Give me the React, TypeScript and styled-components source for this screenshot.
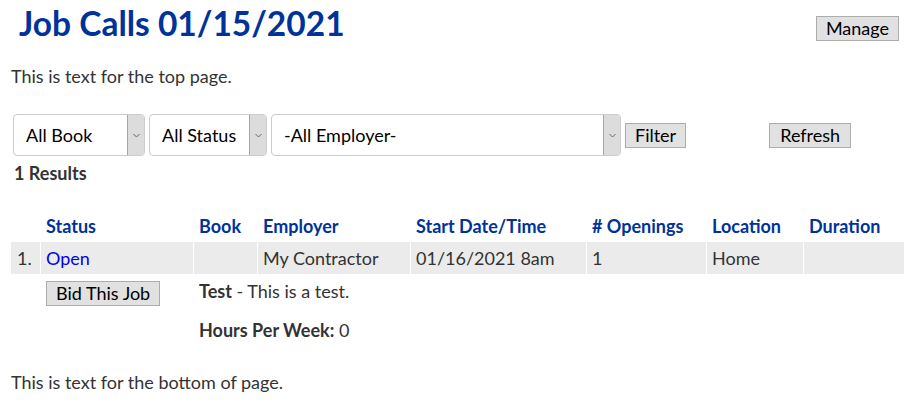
import React from "react";
import styled, { createGlobalStyle } from "styled-components";

const Global = createGlobalStyle`
  html, body { margin: 0; padding: 0; background: #fff; }
  body {
    font-family: Lato, "Open Sans", "Liberation Sans", sans-serif;
    font-size: 18px;
    line-height: 22px;
    color: #333333;
  }
  * { box-sizing: border-box; }
`;

const Page = styled.div`
  padding: 0 7px 0 11px;
`;

const TitleBar = styled.div`
  display: flex;
  justify-content: space-between;
  align-items: flex-start;
`;

const Title = styled.h1`
  margin: 3px 0 0;
  padding-left: 8px;
  font-size: 33.5px;
  line-height: 40px;
  font-weight: 700;
  color: #003399;
`;

const Button = styled.button`
  height: 25px;
  padding: 0 9px;
  background: #e1e1e1;
  border: 1px solid #adadad;
  border-radius: 0;
  font-family: inherit;
  font-size: 18px;
  line-height: 21px;
  color: #000;
  cursor: pointer;
`;

const ManageButton = styled(Button)`
  margin: 16px 4px 0 0;
`;

const Para = styled.p<{ $top: number }>`
  margin: ${(p) => p.$top}px 0 0;
`;

const FilterBar = styled.div`
  display: flex;
  align-items: center;
  gap: 4px;
  margin: 27px 0 0 2px;
`;

const SelectBox = styled.div<{ $w: number }>`
  display: flex;
  width: ${(p) => p.$w}px;
  height: 42px;
  border: 1px solid #cccccc;
  border-radius: 4px;
  background: #fff;
  overflow: hidden;
`;

const SelectText = styled.select`
  flex: 1;
  appearance: none;
  border: none;
  background: transparent;
  padding: 0 0 0 12px;
  font-family: inherit;
  font-size: 18px;
  color: #000;
  outline: none;
`;

const Arrow = styled.span`
  width: 17px;
  display: flex;
  align-items: center;
  justify-content: center;
  background: #dcdcdc;
  border-left: 1px solid #a6a6a6;
`;

const RefreshButton = styled(Button)`
  margin-left: 79px;
  padding: 0 10px;
`;

const Results = styled.div`
  margin: 6px 0 0 3px;
  font-weight: 700;
`;

const Table = styled.table`
  margin: 26px -1px 0;
  width: 895px;
  table-layout: fixed;
  border-collapse: separate;
  border-spacing: 1px 0;
`;

const Th = styled.th<{ $w: number }>`
  width: ${(p) => p.$w}px;
  height: 32px;
  padding: 0 5px;
  text-align: left;
  font-weight: 700;
  color: #003399;
  white-space: nowrap;
`;

const Td = styled.td`
  height: 32px;
  padding: 0 5px;
  background: #ebebeb;
  white-space: nowrap;
`;

const NumTd = styled(Td)`
  padding-left: 6px;
`;

const DetailTd = styled.td`
  padding: 0 5px;
  vertical-align: top;
`;

const Link = styled.a`
  color: #0000ee;
  text-decoration: none;
`;

const BidButton = styled(Button)`
  margin-top: 7px;
`;

const Details = styled.div`
  display: flex;
  flex-direction: column;
  gap: 17px;
  padding-top: 6px;
`;

const Chevron = () => (
  <svg width="7" height="5" viewBox="0 0 7 5">
    <path d="M0.5 1 L3.5 4 L6.5 1" fill="none" stroke="#666" strokeWidth="1" />
  </svg>
);

const Select = ({ w, label }: { w: number; label: string }) => (
  <SelectBox $w={w}>
    <SelectText defaultValue={label}>
      <option>{label}</option>
    </SelectText>
    <Arrow>
      <Chevron />
    </Arrow>
  </SelectBox>
);

const cols: [string, number][] = [
  ["", 29],
  ["Status", 152],
  ["Book", 63],
  ["Employer", 152],
  ["Start Date/Time", 175],
  ["# Openings", 119],
  ["Location", 96],
  ["Duration", 100],
];

export default function App() {
  return (
    <>
      <Global />
      <Page>
        <TitleBar>
          <Title>Job Calls 01/15/2021</Title>
          <ManageButton>Manage</ManageButton>
        </TitleBar>
        <Para $top={22}>This is text for the top page.</Para>
        <FilterBar>
          <Select w={132} label="All Book" />
          <Select w={118} label="All Status" />
          <Select w={350} label="-All Employer-" />
          <Button>Filter</Button>
          <RefreshButton>Refresh</RefreshButton>
        </FilterBar>
        <Results>1 Results</Results>
        <Table>
          <thead>
            <tr>
              {cols.map(([name, w], i) => (
                <Th key={i} $w={w}>
                  {name}
                </Th>
              ))}
            </tr>
          </thead>
          <tbody>
            <tr>
              <NumTd>1.</NumTd>
              <Td>
                <Link href="#">Open</Link>
              </Td>
              <Td></Td>
              <Td>My Contractor</Td>
              <Td>01/16/2021 8am</Td>
              <Td>1</Td>
              <Td>Home</Td>
              <Td></Td>
            </tr>
            <tr>
              <DetailTd></DetailTd>
              <DetailTd>
                <BidButton>Bid This Job</BidButton>
              </DetailTd>
              <DetailTd colSpan={6}>
                <Details>
                  <div>
                    <b>Test</b> - This is a test.
                  </div>
                  <div>
                    <b>Hours Per Week:</b> 0
                  </div>
                </Details>
              </DetailTd>
            </tr>
          </tbody>
        </Table>
        <Para $top={30}>This is text for the bottom of page.</Para>
      </Page>
    </>
  );
}
